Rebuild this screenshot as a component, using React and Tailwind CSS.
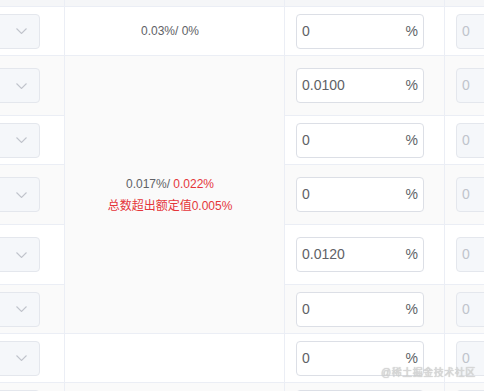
import React from 'react';

const rows = [
  { h: 49, stripe: false, mid: '0.03%/ 0%', rate: '0' },
  { h: 60, stripe: true, rate: '0.0100' },
  { h: 49, stripe: false, rate: '0' },
  { h: 60, stripe: true, rate: '0' },
  { h: 60, stripe: false, rate: '0.0120' },
  { h: 49, stripe: true, rate: '0' },
  { h: 49, stripe: false, mid: '', rate: '0' },
  { h: 49, stripe: true, mid: '', rate: null },
];

function Chevron() {
  return (
    <svg width="11" height="6" viewBox="0 0 11 6" fill="none">
      <path d="M0.5 0.5L5.5 5.5L10.5 0.5" stroke="#c0c4cc" strokeWidth="1.1" />
    </svg>
  );
}

function SelectBox() {
  return (
    <div className="flex h-[35px] w-[120px] shrink-0 items-center justify-end rounded-[4px] border border-[#e4e7ed] bg-[#f5f7fa] pr-[12px]">
      <Chevron />
    </div>
  );
}

function RateInput({ value }) {
  return (
    <div className="flex h-[35px] w-[128px] items-center justify-between rounded-[4px] border border-[#dcdfe6] bg-white pl-[5px] pr-[5px] text-[14px] text-[#606266]">
      {value !== null && <span>{value}</span>}
      {value !== null && <span>%</span>}
    </div>
  );
}

function DisabledInput({ empty }) {
  return (
    <div className="flex h-[35px] w-[80px] shrink-0 items-center rounded-[4px] border border-[#e4e7ed] bg-[#f5f7fa] pl-[5px] text-[14px] text-[#c0c4cc]">
      {!empty && '0'}
    </div>
  );
}

export default function App() {
  const rowTemplate = ['7px', ...rows.map((r) => r.h + 'px')].join(' ');

  return (
    <div
      className="h-[391px] w-[484px] overflow-hidden bg-white"
      style={{ fontFamily: '"Liberation Sans", Arial, "Noto Sans CJK SC", sans-serif' }}
    >
      <div className="relative grid grid-cols-[65px_220px_160px_1fr]" style={{ gridTemplateRows: rowTemplate }}>
        {/* header strip */}
        <div className="border-r border-b border-[#ebeef5] bg-[#f5f6f8]" />
        <div className="border-r border-b border-[#ebeef5] bg-[#f5f6f8]" />
        <div className="border-r border-b border-[#ebeef5] bg-[#f5f6f8]" />
        <div className="border-b border-[#ebeef5] bg-[#f5f6f8]" />

        {rows.map((r, i) => {
          const bg = r.stripe ? 'bg-[#fafafa]' : 'bg-white';
          return (
            <React.Fragment key={i}>
              <div className={`flex items-center justify-end overflow-hidden border-r border-b border-[#ebeef5] pr-[24px] ${bg}`}>
                <SelectBox />
              </div>
              {i === 1 && (
                <div className="row-span-5 flex flex-col items-center justify-center border-r border-b border-[#ebeef5] bg-[#fafafa] pr-[9px] text-[12px] leading-[22px]">
                  <div className="text-[#606266]">
                    0.017%/ <span className="text-[#e5363a]">0.022%</span>
                  </div>
                  <div className="text-[#e5363a]">总数超出额定值0.005%</div>
                </div>
              )}
              {r.mid !== undefined && (
                <div className={`flex items-center justify-center border-r border-b border-[#ebeef5] pr-[9px] text-[12px] text-[#606266] ${bg}`}>
                  {r.mid}
                </div>
              )}
              <div className={`flex items-center border-r border-b border-[#ebeef5] pl-[11px] ${bg}`}>
                <RateInput value={r.rate} />
              </div>
              <div className={`flex items-center overflow-hidden border-b border-[#ebeef5] pl-[11px] ${bg}`}>
                <DisabledInput empty={r.rate === null} />
              </div>
            </React.Fragment>
          );
        })}

        <div
          className="absolute left-[381px] top-[366px] text-[10px] leading-[14px] tracking-[0.5px] text-[#dadada]"
          style={{ textShadow: '0 0 1px #a8a8a8' }}
        >
          @稀土掘金技术社区
        </div>
      </div>
    </div>
  );
}
